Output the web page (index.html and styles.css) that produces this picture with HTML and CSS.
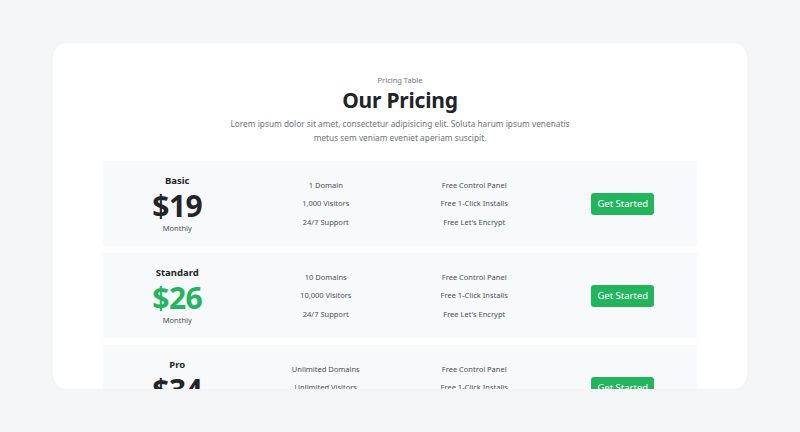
FILE: index.html
```html
<!DOCTYPE html>
<html>
<head>
<meta charset="utf-8">
<link rel="stylesheet" href="styles.css">
</head>
<body>
<div class="card">
  <div class="header">
    <div class="eyebrow">Pricing Table</div>
    <h1 class="title">Our Pricing</h1>
    <p class="lead">Lorem ipsum dolor sit amet, consectetur adipisicing elit. Soluta harum ipsum venenatis metus sem veniam eveniet aperiam suscipit.</p>
  </div>
  <div class="rows">
    <div class="row">
      <div class="plan">
        <div class="plan-name">Basic</div>
        <div class="price">$19</div>
        <div class="period">Monthly</div>
      </div>
      <ul class="features">
        <li>1 Domain</li>
        <li>1,000 Visitors</li>
        <li>24/7 Support</li>
      </ul>
      <ul class="features">
        <li>Free Control Panel</li>
        <li>Free 1-Click Installs</li>
        <li>Free Let's Encrypt</li>
      </ul>
      <div class="action"><a class="btn">Get Started</a></div>
    </div>
    <div class="row">
      <div class="plan">
        <div class="plan-name">Standard</div>
        <div class="price price-green">$26</div>
        <div class="period">Monthly</div>
      </div>
      <ul class="features">
        <li>10 Domains</li>
        <li>10,000 Visitors</li>
        <li>24/7 Support</li>
      </ul>
      <ul class="features">
        <li>Free Control Panel</li>
        <li>Free 1-Click Installs</li>
        <li>Free Let's Encrypt</li>
      </ul>
      <div class="action"><a class="btn">Get Started</a></div>
    </div>
    <div class="row">
      <div class="plan">
        <div class="plan-name">Pro</div>
        <div class="price">$34</div>
        <div class="period">Monthly</div>
      </div>
      <ul class="features">
        <li>Unlimited Domains</li>
        <li>Unlimited Visitors</li>
        <li>24/7 Support</li>
      </ul>
      <ul class="features">
        <li>Free Control Panel</li>
        <li>Free 1-Click Installs</li>
        <li>Free Let's Encrypt</li>
      </ul>
      <div class="action"><a class="btn">Get Started</a></div>
    </div>
  </div>
</div>
</body>
</html>
```

FILE: styles.css
```css
* { box-sizing: border-box; }
html, body { margin: 0; padding: 0; }
body {
  background: #f4f5f7;
  font-family: "Noto Sans", "Open Sans", sans-serif;
  color: #212529;
  padding: 43px 53px;
  height: 432px;
  overflow: hidden;
}
.card {
  background: #fff;
  border-radius: 14px;
  height: 346px;
  overflow: hidden;
  padding: 32px 50px 0;
  box-shadow: 0 0 2px rgba(0,0,0,0.04);
}
.header { text-align: center; }
.eyebrow {
  font-size: 7.5px;
  color: #6c757d;
  line-height: 11px;
}
.title {
  margin: 0;
  font-size: 21px;
  font-weight: 700;
  line-height: 29px;
  color: #212529;
  letter-spacing: -0.2px;
}
.lead {
  margin: 2px auto 0;
  width: 342px;
  font-size: 8.3px;
  line-height: 14px;
  color: #6c757d;
  font-weight: 400;
}
.rows {
  margin-top: 16px;
  display: flex;
  flex-direction: column;
  gap: 7px;
}
.row {
  background: #f8f9fa;
  height: 85px;
  flex: none;
  display: grid;
  grid-template-columns: repeat(4, 1fr);
  align-items: center;
  text-align: center;
}
.plan { display: flex; flex-direction: column; align-items: center; }
.plan-name { font-size: 9.5px; font-weight: 700; line-height: 14px; }
.price { font-size: 30px; font-weight: 700; line-height: 35px; letter-spacing: -0.5px; }
.price-green { color: #22b55e; }
.period { font-size: 7.5px; color: #495057; line-height: 11px; }
.features {
  list-style: none;
  margin: 0;
  padding: 0;
  font-size: 7.5px;
  color: #495057;
  display: flex;
  flex-direction: column;
  gap: 7.5px;
  line-height: 11px;
}
.action { display: flex; justify-content: center; }
.btn {
  display: inline-block;
  background: #22b55e;
  color: #fff;
  font-size: 9.5px;
  line-height: 22px;
  height: 22px;
  padding: 0 6px;
  border-radius: 3px;
}
```
